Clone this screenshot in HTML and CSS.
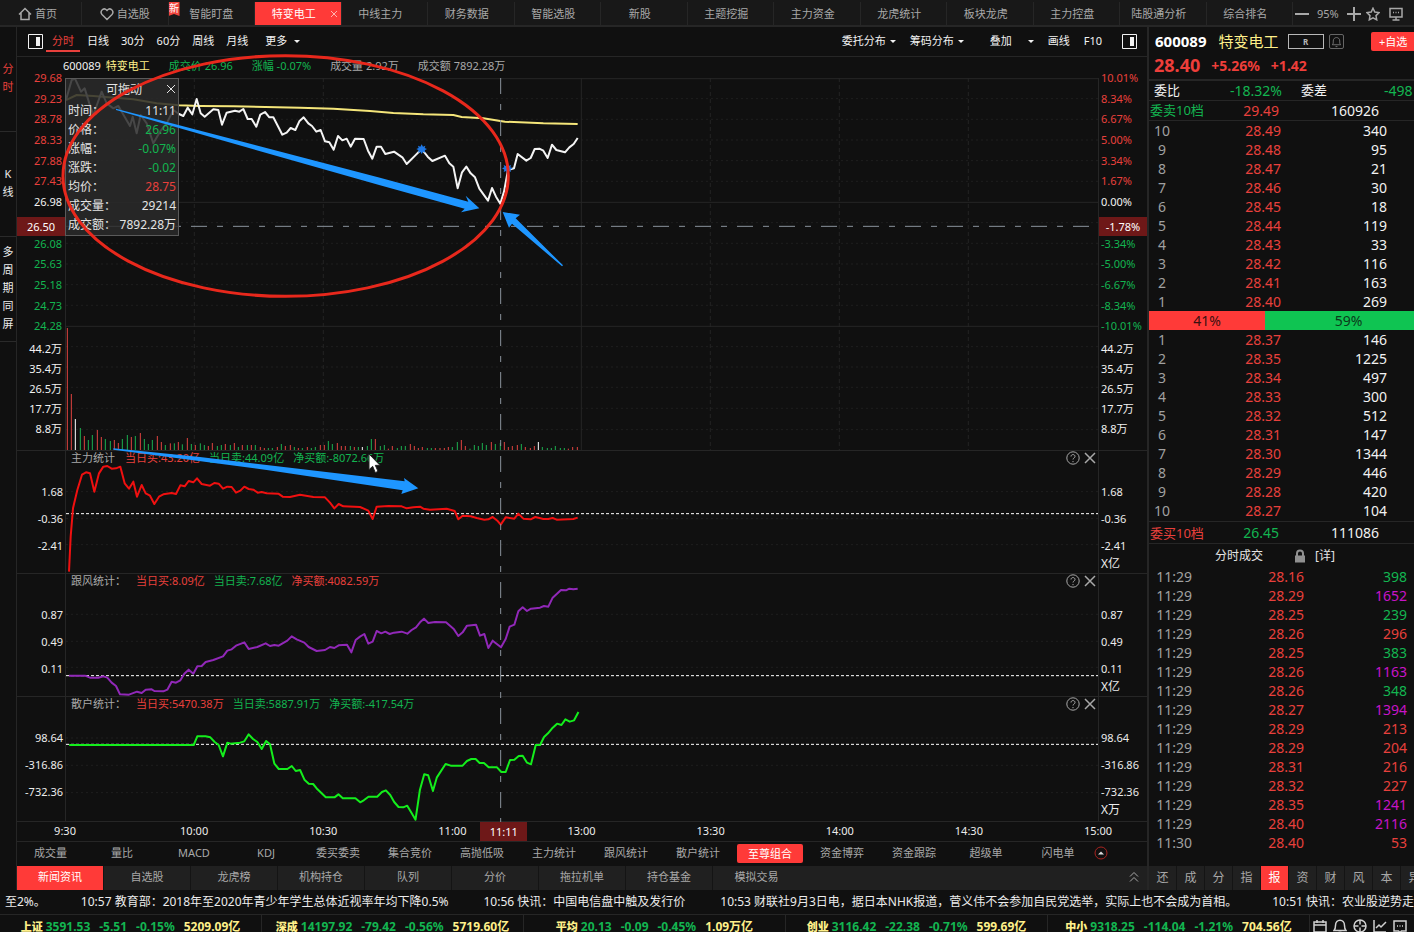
FILE: index.html
```html
<!DOCTYPE html>
<html lang="zh-CN">
<head>
<meta charset="utf-8">
<title>特变电工 600089</title>
<link rel="stylesheet" href="styles.css">
</head>
<body>
<nav class="topbar">
  <button class="tab tab-home"><svg class="ico" viewBox="0 0 14 14"><path d="M1 7.5 7 1.5l6 6M3 6v6.5h8V6"/></svg>首页</button>
  <button class="tab tab-fav"><svg class="ico" viewBox="0 0 14 14"><path d="M7 12.500 2 7.500C-.5 4.500 3 .5 6 2.500L7 3.500l1-1c3-2 6.500 2 4 5z"/></svg>自选股</button>
  <button class="tab tab-new"><span class="new-flag">新</span>智能盯盘</button>
  <button class="tab active">特变电工<svg class="tab-x" viewBox="0 0 8 8"><path d="M1 1l6 6M7 1 1 7"/></svg></button>
  <button class="tab">中线主力</button>
  <button class="tab">财务数据</button>
  <button class="tab">智能选股</button>
  <button class="tab">新股</button>
  <button class="tab">主题挖掘</button>
  <button class="tab">主力资金</button>
  <button class="tab">龙虎统计</button>
  <button class="tab">板块龙虎</button>
  <button class="tab">主力控盘</button>
  <button class="tab">陆股通分析</button>
  <button class="tab">综合排名</button>
  <div class="tools">
    <button aria-label="缩小"><svg class="ico" viewBox="0 0 14 14"><path class="thick" d="M0 7h14"/></svg></button>
    <span>95%</span>
    <button aria-label="放大"><svg class="ico" viewBox="0 0 14 14"><path class="thick" d="M0 7h14M7 0v14"/></svg></button>
    <button aria-label="收藏"><svg class="ico" viewBox="0 0 14 14"><path d="m7 1.200 1.800 3.800 4.200.6-3 3 .7 4.200L7 10.800l-3.700 2 .7-4.200-3-3L5.200 5z"/></svg></button>
    <button aria-label="屏幕"><svg class="ico" viewBox="0 0 14 14"><path d="M1 1.500h12v8.500H1zM7 10v3M3.500 13h7M4 5.500h1M6.500 5.500h1M9 5.500h1"/></svg></button>
  </div>
</nav>

<div class="body">
  <nav class="rail">
    <button class="on">分<br>时</button>
    <button>K<br>线</button>
    <button>多<br>周<br>期<br>同<br>屏</button>
  </nav>

  <main class="main">
    <div class="toolbar">
      <button class="pane-btn" aria-label="左栏"><svg viewBox="0 0 15 15"><path class="frame" d="M.5.5h14v14H.5z"/><path class="fill" d="M8 3h4v9H8z"/></svg></button>
      <button class="per on">分时</button>
      <button class="per">日线</button>
      <button class="per">30分</button>
      <button class="per">60分</button>
      <button class="per">周线</button>
      <button class="per">月线</button>
      <button class="per more">更多<i class="caret"></i></button>
      <span class="grow"></span>
      <button>委托分布<i class="caret"></i></button>
      <button>筹码分布<i class="caret"></i></button>
      <button class="stack">叠加<i class="caret"></i></button>
      <button>画线</button>
      <button>F10</button>
      <button class="pane-btn" aria-label="右栏"><svg viewBox="0 0 15 15"><path class="frame" d="M.5.5h14v14H.5z"/><path class="fill" d="M8 3h4v9H8z"/></svg></button>
    </div>

    <div class="charts">
      <section class="price">
        <div class="axis left">
          <div class="scale red"><span>29.68</span><span>29.23</span><span>28.78</span><span>28.33</span><span>27.88</span><span>27.43</span><span class="w">26.98</span><span></span><span class="green">26.08</span><span class="green">25.63</span><span class="green">25.18</span><span class="green">24.73</span><span class="green">24.28</span></div>
          <div class="vols"><span>44.2万</span><span>35.4万</span><span>26.5万</span><span>17.7万</span><span>8.8万</span></div>
          <b class="mark">26.50</b>
        </div>
        <div class="quote">
          <span class="w">600089</span><span class="yellow">特变电工</span><span class="green gap">成交价 26.96</span><span class="green gap">涨幅 -0.07%</span><span class="gap">成交量 2.92万</span><span class="gap">成交额 7892.28万</span>
        </div>
        <div class="plot">
          <svg class="graph tall" viewBox="198 234 3096 1116" preserveAspectRatio="none">
            <path class="grid" d="M198 296H3294M198 358H3294M198 420H3294M198 482H3294M198 544H3294M198 668H3294M198 730H3294M198 792H3294M198 854H3294M198 916H3294M198 1040H3294M198 1101H3294M198 1162H3294M198 1225H3294M198 1289H3294"/>
            <path class="grid v" d="M583 234V1350M970 234V1350M2131 234V1350M2518 234V1350M2905 234V1350"/>
            <path class="rule" d="M198 236H3294M198 607H3294M198 979H3294M1744 234V1350"/>
            <path class="cross" d="M195 679H3294"/>
            <path class="bar r" d="M202 1350v-366M214 1350v-168M253 1350v-42M292 1350v-60M304 1350v-39M343 1350v-30M355 1350v-21M394 1350v-39M421 1350v-51M472 1350v-42M484 1350v-24M511 1350v-20M535 1350v-24M562 1350v-36M586 1350v-15M625 1350v-12M637 1350v-21M676 1350v-18M703 1350v-21M727 1350v-15M754 1350v-15M781 1350v-9M793 1350v-6M832 1350v-9M856 1350v-12M871 1350v-15M895 1350v-6M922 1350v-9M961 1350v-15M973 1350v-15M1012 1350v-21M1024 1350v-12M1036 1350v-12M1063 1350v-9M1126 1350v-33M1165 1350v-4M1177 1350v-12M1231 1350v-18M1243 1350v-12M1255 1350v-6M1267 1350v-9M1306 1350v-6M1320 1350v-6M1333 1350v-6M1345 1350v-9M1384 1350v-30M1396 1350v-12M1474 1350v-24M1513 1350v-24M1525 1350v-9M1537 1350v-12M1552 1350v-15M1576 1350v-9M1591 1350v-6M1603 1350v-12M1705 1350v-4M1718 1350v-9M1732 1350v-9"/>
            <path class="bar g" d="M241 1350v-66M265 1350v-30M277 1350v-45M316 1350v-33M331 1350v-27M367 1350v-33M382 1350v-45M406 1350v-42M433 1350v-33M445 1350v-18M457 1350v-30M496 1350v-15M523 1350v-20M547 1350v-17M574 1350v-18M601 1350v-20M613 1350v-15M652 1350v-12M664 1350v-15M691 1350v-15M715 1350v-9M742 1350v-15M766 1350v-15M805 1350v-6M817 1350v-6M844 1350v-18M883 1350v-9M907 1350v-6M934 1350v-6M946 1350v-9M985 1350v-27M997 1350v-18M1051 1350v-12M1075 1350v-9M1102 1350v-12M1114 1350v-33M1141 1350v-12M1153 1350v-15M1192 1350v-6M1204 1350v-12M1216 1350v-12M1282 1350v-6M1294 1350v-6M1357 1350v-9M1372 1350v-24M1410 1350v-4M1423 1350v-15M1435 1350v-12M1447 1350v-21M1459 1350v-15M1486 1350v-18M1501 1350v-21M1564 1350v-18M1627 1350v-9M1642 1350v-6M1654 1350v-6M1666 1350v-12M1681 1350v-6M1693 1350v-6"/>
            <path class="bar n" d="M226 1350v-93M1087 1350v-9M1615 1350v-24"/>
            <polyline class="line avg" points="198,300 230,285 280,288 400,298 470,310 537,316 600,318 700,319 900,323 1000,326 1110,333 1180,339 1270,343 1360,345 1385,351 1450,355 1515,365 1630,370 1733,372"/>
            <polyline class="line px" points="198,300 215,240 225,236 243,275 254,265 268,310 280,345 305,275 320,310 340,325 355,318 390,378 398,350 410,400 422,345 440,370 460,430 480,395 500,370 520,330 537,342 550,348 563,323 577,343 590,297 602,340 614,350 640,328 655,330 666,374 680,338 705,332 718,335 730,327 743,357 755,357 769,380 781,344 795,336 808,352 820,352 847,404 860,398 872,384 886,390 898,364 911,352 925,370 936,378 949,395 962,390 975,424 988,427 1001,449 1014,408 1027,421 1040,416 1052,440 1065,416 1091,417 1104,452 1117,476 1130,440 1143,440 1156,462 1182,455 1208,473 1220,492 1246,466 1265,447 1283,470 1297,483 1335,467 1348,490 1360,500 1373,565 1386,517 1399,500 1412,520 1425,532 1438,566 1464,602 1476,564 1488,590 1501,611 1512,575 1524,510 1542,505 1553,462 1579,482 1592,474 1604,447 1618,446 1630,452 1643,474 1656,434 1669,450 1695,457 1708,442 1721,432 1733,414"/>
          </svg>
          <div class="tip">
            <div class="tip-title">可拖动<button aria-label="关闭"><svg viewBox="0 0 10 10"><path d="M1 1l8 8M9 1 1 9"/></svg></button></div>
            <dl>
              <dt>时间：</dt><dd>11:11</dd>
              <dt>价格：</dt><dd class="green">26.96</dd>
              <dt>涨幅：</dt><dd class="green">-0.07%</dd>
              <dt>涨跌：</dt><dd class="green">-0.02</dd>
              <dt>均价：</dt><dd class="red">28.75</dd>
              <dt>成交量：</dt><dd>29214</dd>
              <dt>成交额：</dt><dd>7892.28万</dd>
            </dl>
          </div>
        </div>
        <div class="axis right">
          <div class="scale red"><span>10.01%</span><span>8.34%</span><span>6.67%</span><span>5.00%</span><span>3.34%</span><span>1.67%</span><span class="w">0.00%</span><span></span><span class="green">-3.34%</span><span class="green">-5.00%</span><span class="green">-6.67%</span><span class="green">-8.34%</span><span class="green">-10.01%</span></div>
          <div class="vols"><span>44.2万</span><span>35.4万</span><span>26.5万</span><span>17.7万</span><span>8.8万</span></div>
          <b class="mark">-1.78%</b>
        </div>
      </section>

      <section class="panel">
        <div class="ticks left"><span>1.68</span><span>-0.36</span><span>-2.41</span></div>
        <div class="cell">
          <svg class="graph short" viewBox="198 33 3096 366" preserveAspectRatio="none">
            <path class="grid" d="M198 155H3294M198 236H3294M198 314H3294"/>
            <path class="zero" d="M198 221H3294"/>
            <polyline class="line main-red" points="207,395 212,290 219,205 232,150 246,104 258,97 270,100 283,155 297,100 310,80 322,78 335,86 348,85 361,80 374,130 387,146 400,125 411,170 425,135 437,160 450,167 463,192 477,170 490,163 515,159 528,162 541,136 554,139 566,123 580,127 591,115 605,132 630,137 643,129 656,131 669,146 682,140 695,141 708,158 721,152 733,140 746,147 760,149 773,158 785,156 800,160 835,161 848,170 870,171 900,164 940,171 975,172 990,188 1003,205 1016,192 1030,199 1080,201 1105,212 1118,237 1130,200 1165,198 1205,199 1220,205 1240,202 1260,200 1270,206 1290,209 1340,206 1364,213 1375,238 1388,227 1412,229 1430,234 1453,239 1465,238 1478,231 1492,242 1502,254 1517,232 1543,236 1555,221 1570,236 1592,238 1606,231 1630,237 1645,237 1658,234 1670,239 1720,237 1733,233"/>
          </svg>
          <header><span>主力统计</span><span class="red">当日买:43.20亿</span><span class="green">当日卖:44.09亿</span><span class="green">净买额:-8072.66万</span><i class="grow"></i><button aria-label="帮助"><svg viewBox="0 0 14 14"><circle cx="7" cy="7" r="6.200"/><path d="M5 5.500c0-2.600 4-2.600 4 0C9 7 7 7 7 8.500M7 10v1.200"/></svg></button><button aria-label="关闭"><svg viewBox="0 0 14 14"><path class="x" d="M2 2l10 10M12 2 2 12"/></svg></button></header>
        </div>
        <div class="ticks right"><span>1.68</span><span>-0.36</span><span>-2.41</span><span class="unit">X亿</span></div>
      </section>

      <section class="panel">
        <div class="ticks left"><span>0.87</span><span>0.49</span><span>0.11</span></div>
        <div class="cell">
          <svg class="graph short" viewBox="198 402 3096 366" preserveAspectRatio="none">
            <path class="grid" d="M198 523H3294M198 604H3294M198 682H3294"/>
            <path class="zero" d="M198 707H3294"/>
            <polyline class="line purple" points="207,707 255,707 270,713 295,713 310,709 322,713 335,728 348,738 360,763 387,764 411,755 425,759 437,749 455,748 463,753 490,754 502,749 515,725 528,728 541,721 553,701 566,689 580,701 592,679 605,678 617,666 640,660 669,649 682,632 695,628 708,617 733,607 746,627 772,621 797,610 810,618 823,615 836,617 862,602 875,589 890,598 913,608 926,621 950,633 975,630 990,621 1003,624 1016,616 1041,614 1054,637 1067,600 1080,590 1093,582 1105,611 1118,605 1130,573 1144,580 1156,575 1169,582 1182,578 1205,575 1222,581 1235,570 1248,562 1260,547 1272,536 1285,549 1305,546 1338,547 1362,568 1375,588 1388,577 1401,557 1428,554 1440,587 1453,582 1465,624 1478,602 1503,622 1517,597 1529,560 1543,554 1555,514 1568,502 1581,513 1593,506 1620,503 1632,498 1645,500 1658,473 1671,461 1683,450 1698,451 1708,446 1720,448 1733,446"/>
          </svg>
          <header><span>跟风统计：</span><span class="red">当日买:8.09亿</span><span class="green">当日卖:7.68亿</span><span class="red">净买额:4082.59万</span><i class="grow"></i><button aria-label="帮助"><svg viewBox="0 0 14 14"><circle cx="7" cy="7" r="6.200"/><path d="M5 5.500c0-2.600 4-2.600 4 0C9 7 7 7 7 8.500M7 10v1.200"/></svg></button><button aria-label="关闭"><svg viewBox="0 0 14 14"><path class="x" d="M2 2l10 10M12 2 2 12"/></svg></button></header>
        </div>
        <div class="ticks right"><span>0.87</span><span>0.49</span><span>0.11</span><span class="unit">X亿</span></div>
      </section>

      <section class="panel">
        <div class="ticks left"><span>98.64</span><span>-316.86</span><span>-732.36</span></div>
        <div class="cell">
          <svg class="graph short last" viewBox="167 21 2610 372" preserveAspectRatio="none">
            <path class="grid" d="M167 144H2777M167 226H2777M167 308H2777"/>
            <path class="zero" d="M167 163H2777"/>
            <polyline class="line lime" points="175,165 490,165 499,139 520,139 532,142 543,156 553,165 564,199 575,158 583,161 607,158 618,154 629,133 640,147 651,156 662,177 673,153 683,163 694,221 705,237 727,237 738,228 748,243 759,240 770,269 781,281 792,282 803,298 824,322 846,322 856,313 867,325 899,325 911,337 920,331 932,320 954,320 966,306 976,301 987,315 997,336 1008,351 1020,352 1030,347 1041,369 1051,389 1062,300 1073,253 1083,256 1095,303 1105,262 1127,222 1140,227 1170,227 1181,213 1192,207 1203,207 1213,219 1224,219 1236,232 1257,232 1268,246 1279,246 1290,210 1301,209 1312,198 1322,197 1333,218 1343,223 1355,165 1366,165 1376,141 1386,130 1398,113 1409,101 1420,105 1430,88 1441,95 1452,91 1463,66"/>
          </svg>
          <header><span>散户统计：</span><span class="red">当日买:5470.38万</span><span class="green">当日卖:5887.91万</span><span class="green">净买额:-417.54万</span><i class="grow"></i><button aria-label="帮助"><svg viewBox="0 0 14 14"><circle cx="7" cy="7" r="6.200"/><path d="M5 5.500c0-2.600 4-2.600 4 0C9 7 7 7 7 8.500M7 10v1.200"/></svg></button><button aria-label="关闭"><svg viewBox="0 0 14 14"><path class="x" d="M2 2l10 10M12 2 2 12"/></svg></button></header>
        </div>
        <div class="ticks right"><span>98.64</span><span>-316.86</span><span>-732.36</span><span class="unit">X万</span></div>
      </section>

      <svg class="overlay" viewBox="51 171 3390 2295" preserveAspectRatio="none">
        <path class="cross" d="M1502 234V2466"/>
        <path class="blue star" d="M1265 433l4 7 7-3-2 7 7 3-7 4 2 7-7-3-4 7-4-7-7 3 2-7-7-4 7-3-2-7 7 3zM1522 491l4 7 7-3-2 7 7 3-7 4 2 7-7-3-4 7-4-7-7 3 2-7-7-4 7-3-2-7 7 3z"/>
        <path class="blue" d="M348 326 1140 533 1405 605 1397 587 1438 625 1383 637 1394 626 1140 556 348 330zM1508 636l52 8-13 11 142 141-3 3-150-128-9 12zM340 1345 600 1371 1214 1444 1212 1434 1255 1465 1204 1482 1208 1471 800 1410 340 1349z"/>
        <ellipse class="circle" cx="857" cy="528" rx="668" ry="361"/>
        <path class="cursor" d="M1107 1362v47l11-10 8 19 8-4-8-18h14z"/>
      </svg>
    </div>

    <div class="times">
      <span>9:30</span><span>10:00</span><span>10:30</span><span>11:00</span><span>13:00</span><span>13:30</span><span>14:00</span><span>14:30</span><span>15:00</span>
      <b>11:11</b>
    </div>

    <div class="inds">
      <button>成交量</button><button>量比</button><button>MACD</button><button>KDJ</button><button>委买委卖</button><button>集合竞价</button><button>高抛低吸</button><button>主力统计</button><button>跟风统计</button><button>散户统计</button><button class="on"><span>至尊组合</span></button><button>资金博弈</button><button>资金跟踪</button><button>超级单</button><button>闪电单</button>
      <button class="up" aria-label="展开"><svg viewBox="0 0 14 14"><circle cx="7" cy="7" r="6"/><path d="M4 8.500h6L7 5.500z"/></svg></button>
    </div>

    <div class="tabs">
      <button class="on">新闻资讯</button><button>自选股</button><button>龙虎榜</button><button>机构持仓</button><button>队列</button><button>分价</button><button>拖拉机单</button><button>持仓基金</button><button class="end">模拟交易</button>
      <i class="grow"></i>
      <button class="fold" aria-label="收起"><svg viewBox="0 0 10 12"><path d="M1 5.500 5 1.500l4 4M1 10.500l4-4 4 4"/></svg></button>
    </div>
  </main>

  <aside class="side">
    <div class="wide">
      <div class="stock">
        <div class="name"><b>600089</b><b class="yellow">特变电工</b><span class="rbox">R</span><button class="bell" aria-label="提醒"><svg viewBox="0 0 14 14"><path d="M2.500 10.500h9C10.300 9.500 10.500 8 10.500 6.500c0-5-7-5-7 0 0 1.500.2 3-1 4zM6 12.500h2"/></svg></button><button class="add">+自选</button></div>
        <div class="last-px"><b>28.40</b><b>+5.26%</b><b>+1.42</b></div>
      </div>
      <div class="ratio"><span>委比</span><span class="green num">-18.32%</span><span class="lab">委差</span><span class="green diff">-498</span></div>
      <div class="total"><span class="green">委卖10档</span><span class="red">29.49</span><span class="w">160926</span></div>
      <table class="book">
        <tr><td>10<td>28.49<td>340
        <tr><td>9<td>28.48<td>95
        <tr><td>8<td>28.47<td>21
        <tr><td>7<td>28.46<td>30
        <tr><td>6<td>28.45<td>18
        <tr><td>5<td>28.44<td>119
        <tr><td>4<td>28.43<td>33
        <tr><td>3<td>28.42<td>116
        <tr><td>2<td>28.41<td>163
        <tr><td>1<td>28.40<td>269
      </table>
      <div class="split"><span style="width:41%">41%</span><span style="width:59%">59%</span></div>
      <table class="book">
        <tr><td>1<td>28.37<td>146
        <tr><td>2<td>28.35<td>1225
        <tr><td>3<td>28.34<td>497
        <tr><td>4<td>28.33<td>300
        <tr><td>5<td>28.32<td>512
        <tr><td>6<td>28.31<td>147
        <tr><td>7<td>28.30<td>1344
        <tr><td>8<td>28.29<td>446
        <tr><td>9<td>28.28<td>420
        <tr><td>10<td>28.27<td>104
      </table>
      <div class="total buy"><span class="red">委买10档</span><span class="green">26.45</span><span class="w">111086</span></div>
      <div class="deal"><span>分时成交</span><svg viewBox="0 0 12 14"><path class="sh" d="M3 7V4.500c0-4 6-4 6 0V7"/><path class="bd" d="M1 6.500h10v7H1z"/></svg><button>[详]</button></div>
      <table class="deals">
        <tr><td>11:29<td>28.16<td class="green">398
        <tr><td>11:29<td>28.29<td class="mag">1652
        <tr><td>11:29<td>28.25<td class="green">239
        <tr><td>11:29<td>28.26<td class="red">296
        <tr><td>11:29<td>28.25<td class="green">383
        <tr><td>11:29<td>28.26<td class="mag">1163
        <tr><td>11:29<td>28.26<td class="green">348
        <tr><td>11:29<td>28.27<td class="mag">1394
        <tr><td>11:29<td>28.29<td class="red">213
        <tr><td>11:29<td>28.29<td class="red">204
        <tr><td>11:29<td>28.31<td class="red">216
        <tr><td>11:29<td>28.32<td class="red">227
        <tr><td>11:29<td>28.35<td class="mag">1241
        <tr><td>11:29<td>28.40<td class="mag">2116
        <tr><td>11:30<td>28.40<td class="red">53
      </table>
      <div class="mini"><button>还</button><button>成</button><button>分</button><button>指</button><button class="on">报</button><button>资</button><button>财</button><button>风</button><button>本</button><button>异</button></div>
    </div>
  </aside>
</div>

<div class="news">
  <a href="#">至2%。</a><a href="#">10:57 教育部：2018年至2020年青少年学生总体近视率年均下降0.5%</a><a href="#">10:56 快讯：中国电信盘中触及发行价</a><a href="#">10:53 财联社9月3日电，据日本NHK报道，菅义伟不会参加自民党选举，实际上也不会成为首相。</a><a href="#">10:51 快讯：农业股逆势走</a>
</div>

<footer class="indices">
  <div><b>上证</b><span>3591.53</span><span>-5.51</span><span>-0.15%</span><em>5209.09亿</em></div>
  <div><b>深成</b><span>14197.92</span><span>-79.42</span><span>-0.56%</span><em>5719.60亿</em></div>
  <div><b>平均</b><span>20.13</span><span>-0.09</span><span>-0.45%</span><em>1.09万亿</em></div>
  <div><b>创业</b><span>3116.42</span><span>-22.38</span><span>-0.71%</span><em>599.69亿</em></div>
  <div><b>中小</b><span>9318.25</span><span>-114.04</span><span>-1.21%</span><em>704.56亿</em></div>
  <nav>
    <button aria-label="日历"><svg viewBox="0 0 14 14"><path d="M1 3h12v10H1zM1 6h12M4 1v3M10 1v3"/></svg></button>
    <button aria-label="提醒"><svg viewBox="0 0 14 14"><path d="M1 11.500h12C11.500 10 11.500 8.500 11.500 6.500c0-7-9-7-9 0 0 2 0 3.500-1.500 5zM5.500 13.500h3"/></svg></button>
    <button aria-label="雷达"><svg viewBox="0 0 14 14"><circle cx="7" cy="7" r="6"/><path d="M7 1v4.500M7 8.500V13M1 7h4.500M8.500 7H13"/></svg></button>
    <button aria-label="走势"><svg viewBox="0 0 14 14"><path d="M1 1v12h12M3 9l3-3 2 2 5-5"/></svg></button>
    <button aria-label="消息"><svg viewBox="0 0 14 14"><path d="M1 2h12v10H8.500L7 13.500 5.500 12H1zM4 7h1M6.500 7h1M9 7h1"/></svg></button>
  </nav>
</footer>
</body>
</html>
```
FILE: styles.css
```css
* { box-sizing: border-box; }

body {
  margin: 0;
  height: 100vh;
  overflow: hidden;
  background: #101010;
  color: #a8a8a8;
  font: 11px/18px "Noto Sans", "Noto Sans CJK SC", sans-serif;
  white-space: nowrap;
}

button {
  margin: 0;
  padding: 0;
  border: 0;
  background: none;
  color: inherit;
  font: inherit;
  white-space: nowrap;
}

svg { display: block; fill: none; stroke: currentColor; }
a { color: inherit; text-decoration: none; }
table { border-collapse: collapse; border-spacing: 0; }
i { font-style: normal; }

.grow { flex: 1; }
.red { color: #e8403c; }
.green { color: #13b550; }
.yellow { color: #fff08a; }
.mag { color: #c814c8; }
.w { color: #f2f2f2; }

/* top tabs */
.topbar {
  display: flex;
  height: 27px;
  padding-top: 2px;
  background: #181818;
  border-bottom: 2px solid #262626;
}
.tab {
  position: relative;
  flex: 1 1 86px;
  display: flex;
  align-items: center;
  justify-content: center;
  gap: 3px;
  padding-right: 8px;
  border-right: 1px solid #262626;
}
.tab-home { flex: 0 0 82px; padding-right: 6px; }
.tab-fav, .tab-new { padding-right: 0; }
.tab.active { background: #ff3a38; color: #fff; }
.tab-x { position: absolute; right: 3px; top: 8px; width: 8px; height: 8px; stroke: #ffb3b0; }
.ico { width: 14px; height: 14px; stroke-width: 1.500; }
.thick { stroke-width: 2; }
.new-flag {
  position: absolute;
  left: 0;
  top: 0;
  width: 11px;
  height: 14px;
  background: #f0443c;
  color: #fff;
  font-size: 10px;
  line-height: 12px;
  clip-path: polygon(0 0, 100% 0, 100% 100%, 50% 86%, 0 100%);
}
.tools {
  flex: 0 0 121px;
  display: flex;
  align-items: center;
  gap: 8px;
  padding-left: 2px;
}
.tools button:nth-of-type(3) { margin-left: -3px; }
.tools button:nth-of-type(4) { margin-left: 1px; }

.body { display: grid; grid-template-columns: 17px minmax(0, 1fr) 267px; }

/* left rail */
.rail { border-right: 1px solid #262626; color: #ececec; }
.rail button {
  display: block;
  width: 100%;
  height: 105px;
  padding-bottom: 2px;
  border-bottom: 1px solid #2a2a2a;
  line-height: 18px;
}
.rail .on { color: #e8403c; }

/* toolbar */
.toolbar {
  display: flex;
  align-items: center;
  gap: 14px;
  height: 30px;
  padding: 0 10px 1px 11px;
  border-bottom: 1px solid #262626;
  color: #f2f2f2;
}
.toolbar > button { display: flex; align-items: center; height: 22px; }
.per { margin-right: -2px; }
.per.on {
  margin: 0 -7px 0 -11px;
  padding: 2px 6px 0;
  color: #e8403c;
  border-bottom: 2px solid #e8403c;
}
.more { margin-left: 5px; }
.more .caret { margin-left: 7px; }
.stack { margin-left: 12px; }
.stack .caret { margin-left: 16px; }
.caret {
  margin-left: 4px;
  border: 3px solid transparent;
  border-top-color: #f2f2f2;
  border-bottom: 0;
}
.pane-btn { margin-left: 6px; }
.toolbar .pane-btn:first-child { margin-left: 0; }
.pane-btn svg { width: 15px; height: 15px; }
.pane-btn .fill { fill: #f2f2f2; stroke: none; }

/* charts */
.charts { position: relative; }
.price, .panel {
  display: grid;
  grid-template-columns: 48px minmax(0, 1fr) 48px;
  border-bottom: 1px solid #262626;
}
.price { grid-template-rows: 21px auto; }
.axis {
  position: relative;
  grid-row: 1 / 3;
  display: flex;
  flex-direction: column;
  padding: 11px 0 10px;
}
.axis.left { grid-column: 1; padding-right: 3px; text-align: right; }
.axis.right { grid-column: 3; padding-left: 2px; }
.scale { display: flex; flex-direction: column; height: 269px; }
.scale span { flex: 1; line-height: 20px; }
.vols { display: flex; flex-direction: column; margin-top: 2px; color: #f2f2f2; }
.vols span { line-height: 20px; }
.mark {
  position: absolute;
  left: 0;
  right: 0;
  top: 160px;
  background: #6e1818;
  color: #fff;
  font-weight: 400;
  line-height: 19px;
  text-align: center;
}
.quote {
  grid-column: 1 / 4;
  grid-row: 1;
  display: flex;
  gap: 5px;
  padding-left: 46px;
}
.gap { margin-left: 14px; }
.plot, .cell { border-left: 1px solid #262626; border-right: 1px solid #262626; }
.plot { position: relative; grid-column: 2; grid-row: 2; }
.graph { width: 100%; overflow: hidden; }
.tall { height: 372px; }
.short { height: 122px; }
.last { height: 124px; }
.graph *, .overlay * { vector-effect: non-scaling-stroke; }
.grid { stroke: #1f1f1f; stroke-dasharray: 2 3; }
.grid.v { stroke: #242424; stroke-dasharray: 4 3; }
.rule { stroke: #262626; }
.cross { stroke: #8a929c; stroke-dasharray: 16 10 6 10; }
.bar.r { stroke: #e04440; }
.bar.g { stroke: #1cb050; }
.bar.n { stroke: #fff; }
.line { stroke-width: 2; stroke-linejoin: round; }
.avg { stroke: #f5e67a; }
.px { stroke: #f4f4f4; }
.main-red { stroke: #f01010; }
.purple { stroke: #9128b8; }
.lime { stroke: #14ee1c; }
.zero { stroke: #fff; stroke-dasharray: 3 2; }

.overlay {
  position: absolute;
  left: 0;
  top: 0;
  width: 100%;
  height: 100%;
  overflow: visible;
  pointer-events: none;
}
.blue { fill: #1e96ff; stroke: none; }
.star { fill: #1e78e6; }
.circle { stroke: #e8281c; stroke-width: 3; }
.cursor { fill: #fff; stroke: #222; }

.tip {
  position: absolute;
  left: -1px;
  top: 0;
  width: 114px;
  padding: 1px 2px;
  border: 1px solid #5a5a5a;
  background: rgba(42, 42, 42, .86);
  color: #e4e4e4;
  font-size: 12px;
  line-height: 19px;
}
.tip-title { position: relative; padding-left: 4px; text-align: center; }
.tip-title button { position: absolute; right: 0; top: 4px; }
.tip-title svg { width: 10px; height: 10px; }
.tip dl { display: grid; grid-template-columns: auto 1fr; margin: 2px 0 0; }
.tip dt { grid-column: 1; }
.tip dd { margin: 0 0 0 -6px; text-align: right; }

.ticks { display: flex; flex-direction: column; padding-top: 32px; color: #ececec; }
.ticks.left { padding-right: 2px; text-align: right; }
.ticks.right { padding-left: 2px; }
.ticks span { margin-bottom: 9px; }
.ticks span:nth-child(n + 3) { margin-bottom: 0; }
.ticks .unit { font-size: 12px; }
.cell { display: grid; }
.cell > * { grid-area: 1 / 1; min-width: 0; }
.cell header {
  display: flex;
  align-items: center;
  gap: 9px;
  height: 14px;
  padding: 0 0 0 5px;
}
.cell header span:nth-child(2) { margin-left: 1px; }
.cell header button { margin-right: 1px; }
.cell header button + button { margin-left: -7px; }
.cell header svg { width: 14px; height: 14px; }
.x { stroke-width: 1.500; }

/* time axis */
.times {
  position: relative;
  display: flex;
  justify-content: space-between;
  height: 20px;
  padding: 0 49px 0 48px;
  border-bottom: 1px solid #262626;
  color: #ececec;
  line-height: 17px;
}
.times span { display: flex; justify-content: center; width: 0; }
.times b {
  position: absolute;
  left: 41%;
  top: 0;
  width: 47px;
  background: #6e1818;
  color: #fff;
  font-weight: 400;
  line-height: 19px;
  text-align: center;
}

.inds { display: flex; align-items: center; height: 24px; padding-bottom: 2px; }
.inds button { flex: 0 1 72px; }
.inds button:first-child { flex-basis: 69px; padding-right: 2px; }
.inds .on span {
  display: inline-block;
  padding: 0 11px;
  border-radius: 2px;
  background: #ff3a38;
  color: #fff;
  line-height: 19px;
}
.inds .up { flex: 0 0 14px; }
.up svg { width: 14px; height: 14px; }
.up circle { stroke: #a82420; }
.up path { fill: #ddd; stroke: none; }

.tabs { display: flex; height: 24px; background: #202020; }
.tabs button { flex: 0 1 87px; padding-bottom: 2px; border-right: 1px solid #141414; }
.tabs .on { background: #ff3a38; color: #fff; }
.tabs .end { border-right: 0; }
.tabs .fold { flex: 0 0 10px; margin-right: 8px; border: 0; }
.fold svg { width: 10px; height: 12px; }

/* quote side panel */
.side { border-left: 2px solid #262626; overflow: hidden; font-size: 14px; line-height: 19px; }
.wide { display: flex; flex-direction: column; height: 100%; margin-right: -18px; }
.stock { height: 54px; border-bottom: 2px solid #262626; padding: 2px 0 0 6px; }
.name { display: flex; align-items: center; height: 25px; color: #fff; font-size: 15px; }
.name .yellow { margin-left: 12px; font-weight: 400; color: #fff08a; }
.rbox {
  width: 36px;
  margin-left: 9px;
  border: 1px solid #b8b8b8;
  color: #b8b8b8;
  font-size: 8px;
  font-weight: 700;
  line-height: 13px;
  text-align: center;
}
.bell { margin-left: 5px; border: 1px solid #666; border-radius: 2px; color: #777; }
.bell svg { width: 13px; height: 13px; }
.add {
  margin-left: auto;
  width: 61px;
  padding-left: 8px;
  background: #ff3a38;
  color: #fff;
  font-size: 11px;
  line-height: 19px;
  text-align: left;
  border-radius: 2px;
}
.last-px { display: flex; align-items: center; gap: 11px; height: 22px; margin-left: -1px; color: #ee3e3a; }
.last-px b:first-child { font-size: 18px; }
.ratio, .total { display: flex; height: 20px; border-bottom: 1px solid #262626; color: #f2f2f2; }
.ratio { padding-left: 5px; font-size: 13px; }
.ratio .num { width: 102px; font-size: 14px; text-align: right; }
.ratio .lab { width: 102px; padding-left: 19px; }
.ratio .diff { font-size: 14px; }
.total > span { width: 100px; text-align: right; }
.total > span:first-child { width: 60px; padding-left: 1px; font-size: 13px; text-align: left; }
.total > span:nth-child(2) { width: 70px; }
.book, .deals { width: 100%; table-layout: fixed; color: #e8403c; }
.book td, .deals td { height: 19px; padding: 0; text-align: right; }
.book td:first-child { width: 26px; color: #a0a0a0; text-align: center; }
.book td:nth-child(2) { width: 106px; }
.book td:nth-child(3) { padding-right: 45px; color: #f2f2f2; }
.split { display: flex; color: #3a1010; text-align: center; }
.split span:first-child { background: #ff3a38; }
.split span:last-child { background: #0fc452; color: #0a3a1a; }
.buy { height: 23px; border-top: 1px solid #262626; line-height: 22px; margin-top: 1px; }
.deal { display: flex; align-items: center; height: 23px; padding-left: 66px; color: #e4e4e4; font-size: 12px; }
.deal svg { width: 12px; height: 14px; margin: 0 9px 0 31px; color: #909090; }
.deal .sh { stroke-width: 2; }
.deal .bd { fill: #909090; stroke: none; }
.deals td:first-child { width: 43px; color: #a0a0a0; }
.deals td:nth-child(2) { width: 112px; }
.deals td:nth-child(3) { padding-right: 25px; }
.deals td.red { color: #e8403c; }
.mini { display: flex; height: 24px; margin-top: auto; background: #202020; font-size: 12px; }
.mini button { flex: 0 0 28px; padding-bottom: 2px; border-right: 1px solid #141414; }
.mini .on { background: #ff3a38; color: #fff; }

/* bottom bars */
.news {
  display: flex;
  gap: 35px;
  height: 25px;
  padding-left: 5px;
  overflow: hidden;
  border-bottom: 1px solid #262626;
  color: #ececec;
  font-size: 12px;
  line-height: 24px;
}
.indices { display: flex; height: 24px; font-size: 12px; font-weight: 700; line-height: 24px; }
.indices div {
  flex: 1 1 262px;
  display: flex;
  justify-content: center;
  gap: 9px;
  border-right: 1px solid #262626;
  color: #13b550;
}
.indices b, .indices em { color: #fff08a; font-style: normal; }
.indices b { margin-right: -6px; font-size: 11px; }
.indices nav { flex: 0 0 104px; display: flex; align-items: flex-start; gap: 6px; padding-left: 3px; color: #d0d0d0; }
.indices svg { width: 14px; height: 14px; margin-top: 4px; stroke-width: 1.500; }
```
